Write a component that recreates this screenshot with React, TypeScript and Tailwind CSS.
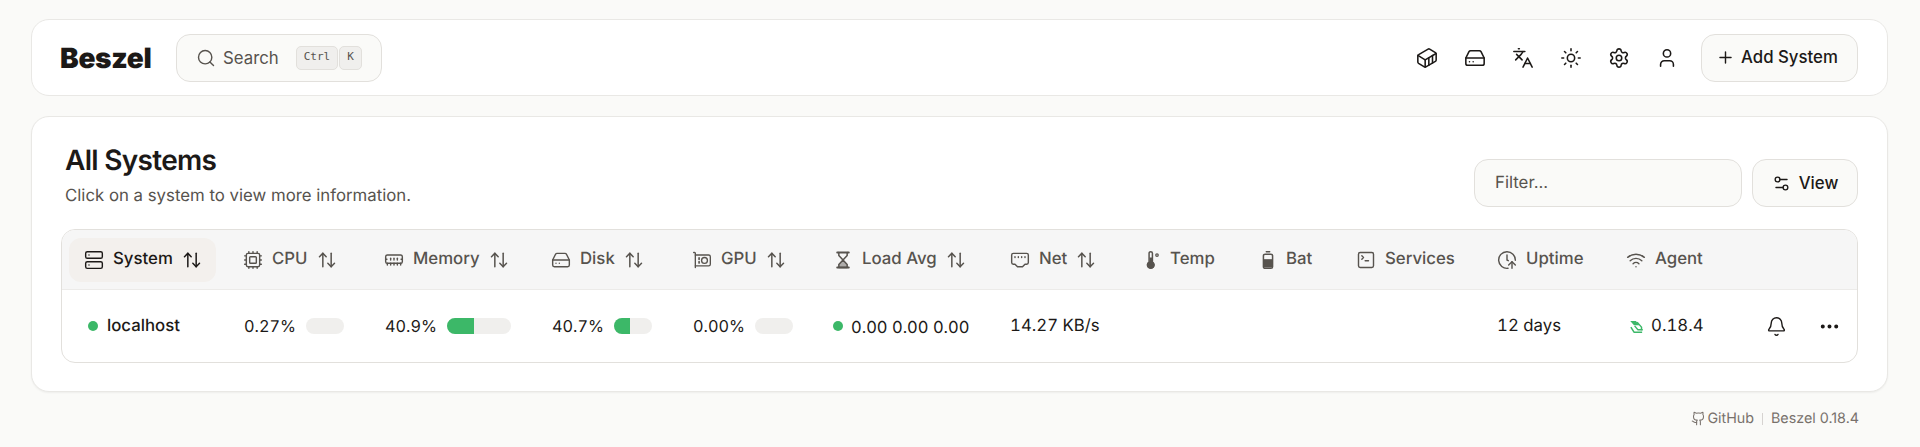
import { ReactNode } from 'react';
import {
  ArrowUpDown,
  Bell,
  ClockArrowUp,
  Container,
  Cpu,
  Ellipsis,
  EthernetPort,
  Github,
  HardDrive,
  Languages,
  MemoryStick,
  Plus,
  Search,
  Server,
  Settings,
  Settings2,
  SquareTerminal,
  Sun,
  User,
  Wifi,
} from 'lucide-react';

const font = "font-['Inter',sans-serif]";

const ThermIcon = () => (
  <svg viewBox="0 0 24 24" className="size-[20px] -mr-[1px]" fill="none" stroke="currentColor" strokeWidth="1.8">
    <path d="M8.5 4a2 2 0 0 1 4 0v10.5a4 4 0 1 1-4 0z" />
    <circle cx="10.5" cy="18" r="3.5" fill="currentColor" />
    <path d="M10.5 9v8" strokeWidth="3" />
    <circle cx="18" cy="6" r="1.5" strokeWidth="1.5" />
  </svg>
);

const BatIcon = () => (
  <svg viewBox="0 0 24 24" className="size-[20px] -mr-[1px]" fill="none" stroke="currentColor" strokeWidth="1.8" strokeLinecap="round">
    <path d="M10 2h4" />
    <rect x="6.5" y="5" width="11" height="17" rx="2" />
    <rect x="7" y="11" width="10" height="10" fill="currentColor" stroke="none" />
  </svg>
);

const GpuIcon = () => (
  <svg viewBox="0 0 24 24" className="size-[20px]" fill="none" stroke="currentColor" strokeWidth="1.6" strokeLinecap="round" strokeLinejoin="round">
    <path d="M2 3h1a1 1 0 0 1 1 1v17" />
    <path d="M4 6h16a2 2 0 0 1 2 2v9a2 2 0 0 1-2 2H4" />
    <circle cx="15" cy="12.5" r="3.5" />
    <path d="M8.5 9.5v1.5M8.5 14v1.5" strokeWidth="2" />
  </svg>
);

const HourglassIcon = () => (
  <svg viewBox="0 0 24 24" className="size-[20px]" fill="none" stroke="currentColor" strokeWidth="1.8" strokeLinecap="round" strokeLinejoin="round">
    <path d="M5 3h14M5 21h14" strokeWidth="2.2" />
    <path d="M7 3v3.5L12 12l5-5.5V3" />
    <path d="M7 21v-3.5L12 12l5 5.500V21z" fill="currentColor" fillOpacity="0.45" />
  </svg>
);

const AgentIcon = () => (
  <svg viewBox="0 0 24 24" className="size-[15px] text-[#3cb868]" fill="none" stroke="currentColor" strokeWidth="2.4" strokeLinejoin="round">
    <path d="M2 3h9l6 7H8z" fill="currentColor" stroke="none" />
    <path d="M13 5l7 8v5" />
    <path d="M9 11l5 6h8" />
    <path d="M3 13l5 8h13" />
  </svg>
);

type Col = { label: string; icon: ReactNode; sort?: boolean; width: string };

const iconCls = 'size-[20px]';
const thin = 1.7;

const columns: Col[] = [
  { label: 'System', icon: <Server className={iconCls} strokeWidth={thin} />, sort: true, width: 'w-[166px]' },
  { label: 'CPU', icon: <Cpu className={iconCls} strokeWidth={thin} />, sort: true, width: 'w-[141px]' },
  { label: 'Memory', icon: <MemoryStick className={iconCls} strokeWidth={thin} />, sort: true, width: 'w-[167px]' },
  { label: 'Disk', icon: <HardDrive className={iconCls} strokeWidth={thin} />, sort: true, width: 'w-[141px]' },
  { label: 'GPU', icon: <GpuIcon />, sort: true, width: 'w-[141px]' },
  { label: 'Load Avg', icon: <HourglassIcon />, sort: true, width: 'w-[177px]' },
  { label: 'Net', icon: <EthernetPort className={iconCls} strokeWidth={thin} />, sort: true, width: 'w-[132px]' },
  { label: 'Temp', icon: <ThermIcon />, width: 'w-[116px]' },
  { label: 'Bat', icon: <BatIcon />, width: 'w-[98px]' },
  { label: 'Services', icon: <SquareTerminal className={iconCls} strokeWidth={thin} />, width: 'w-[141px]' },
  { label: 'Uptime', icon: <ClockArrowUp className={iconCls} strokeWidth={thin} />, width: 'w-[129px]' },
  { label: 'Agent', icon: <Wifi className={iconCls} strokeWidth={thin} />, width: 'w-[120px]' },
];

const Meter = ({ value, w }: { value: number; w: string }) => (
  <div className={`h-[16px] ${w} rounded-full bg-[#f0efed] overflow-hidden`}>
    {value > 0 && <div className="h-full bg-[#3cb868]" style={{ width: `${value}%` }} />}
  </div>
);

const Dot = () => <span className="size-[10px] rounded-full bg-[#3cb868] shrink-0" />;

const Usage = ({ text, value, w, width }: { text: string; value: number; w: string; width: string }) => (
  <div className={`${width} pl-4 flex items-center gap-[11px]`}>
    <span className="w-[51px] pt-[1px] text-[16.3px]">{text}</span>
    <Meter value={value} w={w} />
  </div>
);

export default function App() {
  return (
    <div className={`${font} min-h-screen bg-[#fafaf8] text-[#1c1917] pl-[31px] pr-[32px] pt-[19px] text-[16.8px] [text-rendering:geometricPrecision]`}>
      <header className="h-[77px] bg-white border border-[#e9e8e5] rounded-[18px] flex items-center pl-[28px] pr-[29px]">
        <span className="text-[28px] leading-none font-black tracking-[-0.01em] text-[#1c1917] w-[116px]">Beszel</span>
        <button className="h-[48px] w-[206px] rounded-[14px] border border-[#e2e0dc] bg-[#fafaf8] flex items-center pl-[19px] text-[#57534e]">
          <Search className="size-[20px] mr-[7px]" strokeWidth={1.7} />
          <span className="pt-[2px]">Search</span>
          <span className="ml-[17px] flex gap-[1px]">
            <kbd className="h-[24px] px-[7px] rounded-[5px] border border-[#e2e0dc] bg-[#f0efed] flex items-center font-['DejaVu_Sans_Mono',monospace] text-[11px]">Ctrl</kbd>
            <kbd className="h-[24px] px-[7px] rounded-[5px] border border-[#e2e0dc] bg-[#f0efed] flex items-center font-['DejaVu_Sans_Mono',monospace] text-[11px]">K</kbd>
          </span>
        </button>
        <div className="ml-auto flex items-center text-[#1c1917]">
          <div className="flex items-center gap-[26px] mr-[23px]">
            <Container className="size-[22px]" strokeWidth={1.7} />
            <HardDrive className="size-[22px]" strokeWidth={1.7} />
            <Languages className="size-[22px]" strokeWidth={1.7} />
            <Sun className="size-[22px]" strokeWidth={1.7} />
            <Settings className="size-[22px]" strokeWidth={1.7} />
            <User className="size-[22px]" strokeWidth={1.7} />
          </div>
          <button className="h-[48px] w-[157px] rounded-[14px] border border-[#e2e0dc] bg-[#fafaf8] flex items-center pl-[14px] gap-[6px] font-medium">
            <Plus className="size-[19px]" strokeWidth={1.8} />
            <span className="pt-[1px]">Add System</span>
          </button>
        </div>
      </header>

      <main className="mt-[20px] h-[276px] bg-white border border-[#e9e8e5] rounded-[18px] shadow-[0_1px_2px_rgba(0,0,0,0.05)] px-[29px]">
        <div className="flex justify-between pl-[4px] h-[112px] pb-[22px]">
          <div className="pt-[26px]">
            <h1 className="text-[28px] leading-[34px] font-semibold tracking-[-0.025em] text-[#1c1917]">All Systems</h1>
            <p className="leading-[24px] mt-[7px] text-[#57534e]">Click on a system to view more information.</p>
          </div>
          <div className="flex gap-[10px] self-end">
            <div className="h-[48px] w-[268px] rounded-[14px] border border-[#e2e0dc] bg-[#fafaf8] flex items-center pl-[20px] pt-[2px] text-[#57534e]">Filter...</div>
            <button className="h-[48px] w-[106px] rounded-[14px] border border-[#e2e0dc] bg-[#fafaf8] flex items-center justify-center gap-[8px] font-medium">
              <Settings2 className="size-[19px]" strokeWidth={1.7} />
              <span className="pt-[2px]">View</span>
            </button>
          </div>
        </div>

        <div className="border border-[#e2e0dc] rounded-[14px] overflow-hidden">
          <div className="h-[60px] bg-[#f6f6f6] border-b border-[#ecebe9] flex items-center text-[#57534e]">
            {columns.map((c, i) => (
              <div key={c.label} className={`${c.width} shrink-0 pl-[7px]`}>
                <div className={`h-[44px] inline-flex items-center gap-[9px] rounded-[12px] ${i === 0 ? 'w-[147px] pl-[15px] bg-[#f3f0ed] text-[#1c1917]' : 'pl-[8px]'}`}>
                  {c.icon}
                  <span className="font-medium pt-[1px]">{c.label}</span>
                  {c.sort && <ArrowUpDown className="size-[20px]" strokeWidth={1.8} />}
                </div>
              </div>
            ))}
          </div>
          <div className="h-[72px] flex items-center tabular-nums">
            <div className="w-[166px] pl-[26px] flex items-center gap-[9px] font-medium">
              <Dot />
              <span className="pt-[2px]">localhost</span>
            </div>
            <Usage text="0.27%" value={0} w="w-[38px]" width="w-[141px]" />
            <Usage text="40.9%" value={42} w="w-[64px]" width="w-[167px]" />
            <Usage text="40.7%" value={41} w="w-[38px]" width="w-[141px]" />
            <Usage text="0.00%" value={0} w="w-[38px]" width="w-[141px]" />
            <div className="w-[177px] pl-[15px] flex items-center gap-[8px]">
              <Dot />
              <span className="pt-[2px] text-[16.5px]">0.00 0.00 0.00</span>
            </div>
            <div className="w-[132px] pl-[15px] pt-[2px] whitespace-nowrap">14.27 KB/s</div>
            <div className="w-[116px]" />
            <div className="w-[98px]" />
            <div className="w-[141px]" />
            <div className="w-[129px] pl-[15px] pt-[2px]">12 days</div>
            <div className="w-[120px] pl-[18px] flex items-center gap-[7px]">
              <AgentIcon />
              <span className="pt-[2px]">0.18.4</span>
            </div>
            <Bell className="size-[21px] ml-[35px]" strokeWidth={1.6} />
            <Ellipsis className="size-[23px] ml-[31px]" strokeWidth={2.2} />
          </div>
        </div>
      </main>

      <footer className="flex justify-end items-center mt-[16px] pr-[29px] text-[14.3px] text-[#78716c]">
        <Github className="size-[15px] mr-[1px]" strokeWidth={1.7} />
        <span>GitHub</span>
        <span className="w-px h-[12px] bg-[#d6d3d1] mx-[8px]" />
        <span>Beszel 0.18.4</span>
      </footer>
    </div>
  );
}
